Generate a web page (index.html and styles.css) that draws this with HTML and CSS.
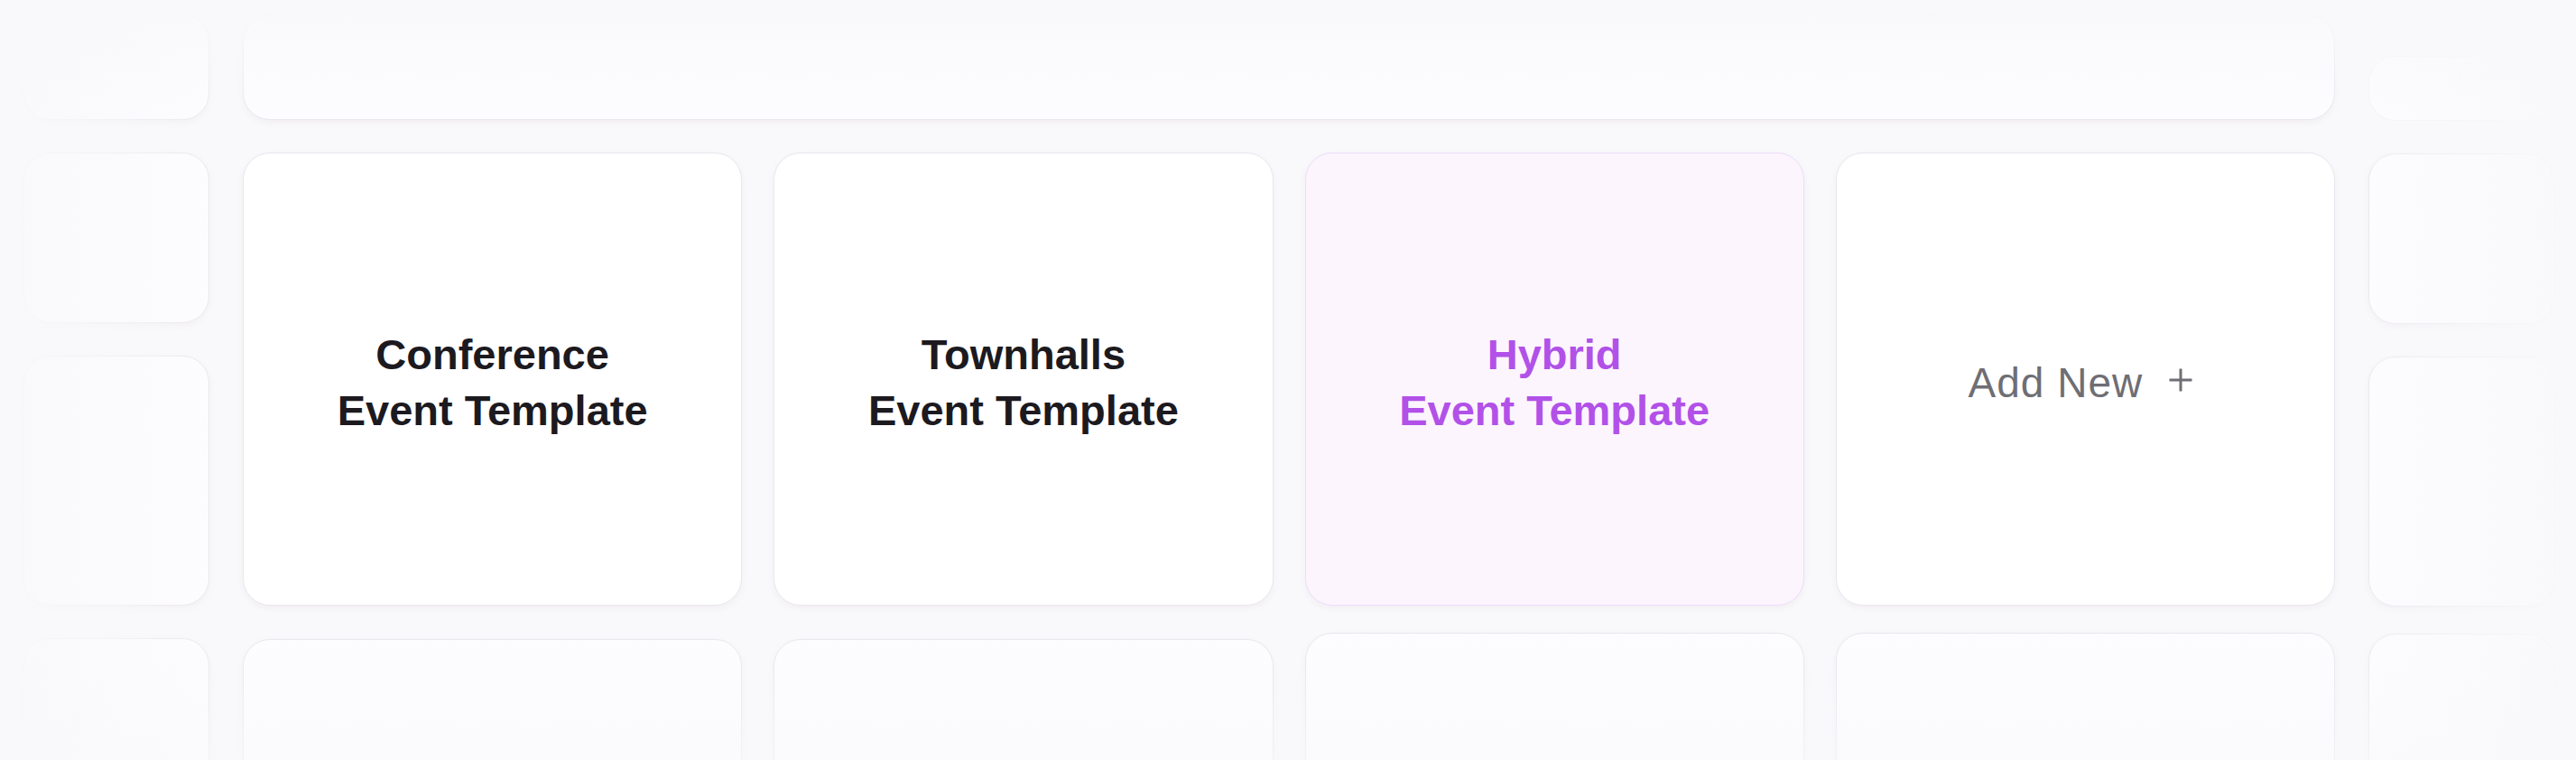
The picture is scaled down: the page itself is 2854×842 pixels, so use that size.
FILE: index.html
```html
<!DOCTYPE html>
<html lang="en">
<head>
<meta charset="utf-8">
<title>Event Templates</title>
<link rel="stylesheet" href="styles.css">
</head>
<body>
<div class="board">
  <div class="side">
    <div class="card ghost side-top"></div>
    <div class="card ghost side-a"></div>
    <div class="card ghost side-b"></div>
    <div class="card ghost side-c"></div>
  </div>
  <div class="center">
    <div class="card ghost wide"></div>
    <div class="row">
      <div class="card tpl"><span class="title">Conference<br>Event Template</span></div>
      <div class="card tpl"><span class="title">Townhalls<br>Event Template</span></div>
      <div class="card tpl active"><span class="title">Hybrid<br>Event Template</span></div>
      <div class="card tpl add"><span class="add-label">Add New</span><svg class="plus" viewBox="0 0 28 28" width="28" height="28" aria-hidden="true"><path d="M14 1.5V26.5M1.5 14H26.5" stroke="#6f6e74" stroke-width="3" fill="none"/></svg></div>
    </div>
    <div class="row bottom">
      <div class="card ghost low"></div>
      <div class="card ghost low"></div>
      <div class="card ghost"></div>
      <div class="card ghost"></div>
    </div>
  </div>
  <div class="side right">
    <div class="card ghost side-top rt"></div>
    <div class="card ghost side-a"></div>
    <div class="card ghost side-b"></div>
    <div class="card ghost side-c rc"></div>
  </div>
</div>
<div class="fade"></div>
</body>
</html>
```
FILE: styles.css
```css
html, body {
  margin: 0;
  padding: 0;
}
html {
  overflow: hidden;
}
body {
  width: 2854px;
  height: 842px;
  overflow: hidden;
  background: #f9f8fa;
  font-family: "Liberation Sans", Arial, sans-serif;
  position: relative;
}
.board {
  box-sizing: border-box;
  height: 842px;
  overflow: hidden;
  display: flex;
  gap: 37px;
  padding-left: 26px;
  padding-top: 16px;
}
.side {
  width: 206px;
  display: flex;
  flex-direction: column;
  gap: 36px;
  flex-shrink: 0;
}
.center {
  width: 2318px;
  display: flex;
  flex-direction: column;
  gap: 36px;
  flex-shrink: 0;
}
.card {
  box-sizing: border-box;
  background: #ffffff;
  border: 1.5px solid #e9e7ed;
  border-radius: 30px;
  box-shadow: 0 3px 8px rgba(40, 20, 60, 0.04);
  flex-shrink: 0;
}
.ghost {
  background: #fdfcfe;
}
.side-top { height: 117px; }
.side .rt {
  height: 72px;
  margin-top: 46px;
  border-color: #f3f2f5;
  box-shadow: none;
}
.side-a { height: 189px; }
.side-b { height: 277px; }
.side-c { height: 170px; }
.side .rc { margin-top: -6px; }
.wide { height: 117px; }
.row {
  display: grid;
  grid-template-columns: repeat(4, 1fr);
  gap: 35px;
  align-items: start;
}
.tpl {
  height: 502px;
  display: flex;
  align-items: center;
  justify-content: center;
  text-align: center;
}
.row.bottom {
  margin-top: -6px;
}
.row.bottom .card {
  height: 170px;
}
.row.bottom .low {
  margin-top: 7px;
}
.title {
  font-size: 47px;
  font-weight: 700;
  line-height: 62px;
  color: #1c1a1f;
  margin-top: 7px;
}
.active {
  background: #fcf5fe;
  border-color: #eedcfb;
}
.active .title {
  color: #b151e8;
}
.add {
  gap: 28px;
  padding-right: 10px;
}
.add-label {
  font-size: 46px;
  font-weight: 400;
  color: #6f6e74;
  letter-spacing: 1px;
  line-height: 1;
  margin-top: 8px;
}
.plus {
  display: block;
  margin-top: 1px;
}
.fade {
  position: absolute;
  inset: 0;
  pointer-events: none;
  background:
    linear-gradient(to right, rgba(249,248,250,0.97) 0px, rgba(249,248,250,0.55) 130px, rgba(249,248,250,0) 250px),
    linear-gradient(to left, rgba(249,248,250,0.97) 0px, rgba(249,248,250,0.6) 130px, rgba(249,248,250,0) 260px),
    linear-gradient(to bottom, rgba(249,248,250,1) 0px, rgba(249,248,250,0.75) 40px, rgba(249,248,250,0) 135px),
    linear-gradient(to top, rgba(249,248,250,0.6) 0px, rgba(249,248,250,0.2) 80px, rgba(249,248,250,0) 150px);
}
```
